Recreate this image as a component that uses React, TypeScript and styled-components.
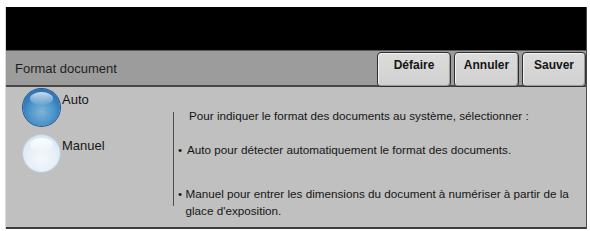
import React from "react";
import styled, { createGlobalStyle } from "styled-components";

const Global = createGlobalStyle`
  html, body { margin: 0; padding: 0; background: #ffffff; }
  body { font-family: "Liberation Sans", Arial, sans-serif; }
  * { box-sizing: border-box; }
`;

const Frame = styled.div`
  width: 582px;
  margin: 7px 0 0 5px;
  border-left: 1px solid #d9d9d9;
  border-right: 1px solid #4a4a4a;
  display: flex;
  flex-direction: column;
`;

const Header = styled.div`
  height: 43px;
  background: #000000;
`;

const TitleBar = styled.div`
  height: 37px;
  background: #9c9c9c;
  border-top: 1px solid #5a5a5a;
  border-bottom: 2px solid #474747;
  display: flex;
  align-items: flex-end;
  justify-content: space-between;
  padding-left: 9px;
`;

const Title = styled.div`
  align-self: center;
  font-size: 13px;
  color: #1e1e1e;
  padding-top: 1px;
`;

const Buttons = styled.div`
  display: flex;
  gap: 3px;
  margin-bottom: -2px;
`;

const Button = styled.button<{ $w: number }>`
  width: ${(p) => p.$w}px;
  height: 35px;
  padding: 5px 0 0 0;
  display: flex;
  justify-content: center;
  align-items: flex-start;
  background: linear-gradient(#dcdcdc, #d0d0d0);
  border: 1px solid #2e2e2e;
  border-radius: 4px;
  box-shadow: inset 1px 1px 0 #f2f2f2, inset -1px -1px 0 #9a9a9a;
  font-family: "Liberation Sans", Arial, sans-serif;
  font-weight: bold;
  font-size: 12px;
  color: #151515;
`;

const Content = styled.div`
  height: 142px;
  background: #c0c0c0;
  border-bottom: 2px solid #3c3c3c;
  display: flex;
`;

const RadioList = styled.div`
  width: 167px;
  padding: 2px 0 0 17px;
  display: flex;
  flex-direction: column;
  gap: 9px;
`;

const RadioRow = styled.div`
  display: flex;
  gap: 2px;
`;

const Circle = styled.span<{ $on: boolean }>`
  position: relative;
  width: 37px;
  height: 37px;
  flex: none;
  border-radius: 50%;
  background: ${(p) =>
    p.$on
      ? "radial-gradient(circle at 50% 62%, #7fb4d8 0%, #4d95c9 42%, #2a73b6 72%, #1a5c9e 100%)"
      : "radial-gradient(circle at 50% 62%, #f4f8fb 0%, #e6eff7 50%, #d3e3f0 85%, #c3d6e6 100%)"};
  box-shadow: ${(p) => (p.$on ? "0 0 0 1px #1d5b94" : "0 0 0 1px #b9cede")};
  &::after {
    content: "";
    position: absolute;
    left: 7px;
    top: 3px;
    width: 23px;
    height: 13px;
    border-radius: 50%;
    background: ${(p) =>
      p.$on
        ? "linear-gradient(rgba(255,255,255,0.75), rgba(255,255,255,0.05))"
        : "linear-gradient(rgba(255,255,255,0.95), rgba(255,255,255,0.2))"};
  }
`;

const RadioLabel = styled.span`
  margin-top: 3px;
  font-size: 13px;
  color: #161616;
`;

const Info = styled.div`
  display: flex;
`;

const Rule = styled.div`
  width: 1px;
  height: 94px;
  margin-top: 25px;
  background: #4e4e4e;
`;

const Texts = styled.div`
  width: 404px;
  padding: 20px 0 0 4px;
  display: flex;
  flex-direction: column;
  font-size: 11.7px;
  line-height: 17px;
  color: #161616;
`;

const Intro = styled.div`
  padding-left: 11px;
`;

const Item = styled.div<{ $top: number }>`
  display: flex;
  margin-top: ${(p) => p.$top}px;
`;

const Bullet = styled.span<{ $w: number }>`
  width: ${(p) => p.$w}px;
  flex: none;
`;

export default function App() {
  return (
    <>
      <Global />
      <Frame>
        <Header />
        <TitleBar>
          <Title>Format document</Title>
          <Buttons>
            <Button $w={74}>Défaire</Button>
            <Button $w={65}>Annuler</Button>
            <Button $w={64}>Sauver</Button>
          </Buttons>
        </TitleBar>
        <Content>
          <RadioList>
            <RadioRow>
              <Circle $on={true} />
              <RadioLabel>Auto</RadioLabel>
            </RadioRow>
            <RadioRow>
              <Circle $on={false} />
              <RadioLabel>Manuel</RadioLabel>
            </RadioRow>
          </RadioList>
          <Info>
            <Rule />
            <Texts>
              <Intro>Pour indiquer le format des documents au système, sélectionner :</Intro>
              <Item $top={17}>
                <Bullet $w={9}>•</Bullet>
                <span>Auto pour détecter automatiquement le format des documents.</span>
              </Item>
              <Item $top={27}>
                <Bullet $w={7.5}>•</Bullet>
                <span>
                  Manuel pour entrer les dimensions du document à numériser à partir de la glace
                  d'exposition.
                </span>
              </Item>
            </Texts>
          </Info>
        </Content>
      </Frame>
    </>
  );
}
